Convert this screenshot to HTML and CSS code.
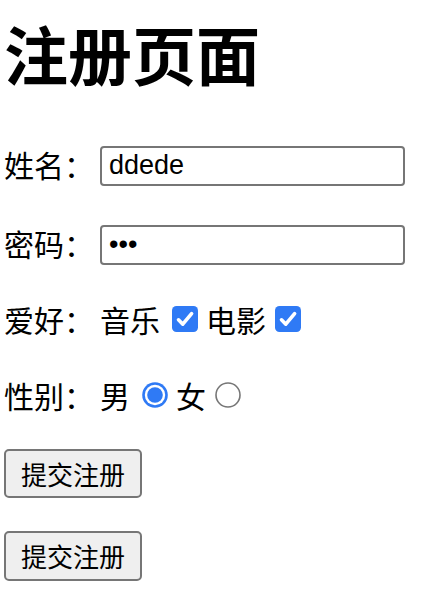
FILE: index.html
```html
<!DOCTYPE html>
<html lang="zh-CN">
<head>
<meta charset="utf-8">
<title>注册页面</title>
<link rel="stylesheet" href="styles.css">
</head>
<body>
<form class="page">
  <h1 class="title">注册页面</h1>
  <div class="row row-name">
    <span class="label">姓名：</span>
    <input class="field" type="text" value="ddede">
  </div>
  <div class="row row-pass">
    <span class="label">密码：</span>
    <input class="field" type="password" value="abc">
  </div>
  <div class="row row-hobby">
    <span class="label">爱好：</span>
    <span class="opt-text">音乐</span>
    <svg class="box box-first" viewBox="0 0 26 26" width="26" height="26"><rect x="0" y="0" width="26" height="26" rx="4.5" fill="#2f7af5"/><path d="M6.5 13.8 L10.8 18.2 L19.6 7.6" fill="none" stroke="#fff" stroke-width="3.6" stroke-linecap="round" stroke-linejoin="round"/></svg>
    <span class="opt-text">电影</span>
    <svg class="box box-last" viewBox="0 0 26 26" width="26" height="26"><rect x="0" y="0" width="26" height="26" rx="4.5" fill="#2f7af5"/><path d="M6.5 13.8 L10.8 18.2 L19.6 7.6" fill="none" stroke="#fff" stroke-width="3.6" stroke-linecap="round" stroke-linejoin="round"/></svg>
  </div>
  <div class="row row-sex">
    <span class="label">性别：</span>
    <span class="opt-text">男</span>
    <svg class="box box-first" viewBox="0 0 26 26" width="26" height="26"><circle cx="13" cy="13" r="12.8" fill="#2f7af5"/><circle cx="13" cy="13" r="10.2" fill="#fff"/><circle cx="13" cy="13" r="7.8" fill="#2f7af5"/></svg>
    <span class="opt-text">女</span>
    <svg class="box box-last" viewBox="0 0 26 26" width="26" height="26"><circle cx="13" cy="13" r="12" fill="#fff" stroke="#767676" stroke-width="1.6"/></svg>
  </div>
  <div class="row row-btn1">
    <button class="btn" type="button">提交注册</button>
  </div>
  <div class="row row-btn2">
    <button class="btn" type="submit">提交注册</button>
  </div>
</form>
</body>
</html>
```

FILE: styles.css
```css
html, body {
  margin: 0;
  padding: 0;
  background: #ffffff;
}

body {
  font-family: "Noto Sans CJK SC", "Noto Sans", sans-serif;
  color: #000000;
}

.page {
  display: flex;
  flex-direction: column;
  align-items: flex-start;
  padding: 0 0 0 4px;
}

.title {
  margin: 20px 0 0 0;
  height: 64px;
  line-height: 64px;
  font-size: 64px;
  font-weight: 700;
  letter-spacing: 0;
}

.row {
  display: flex;
  align-items: center;
  height: 40px;
  font-size: 30px;
}

.row-name { margin-top: 60px; }
.row-pass { margin-top: 39px; }
.row-hobby { margin-top: 36px; }
.row-sex { margin-top: 36px; }
.row-btn1 { margin-top: 34px; height: 49px; }
.row-btn2 { margin-top: 33px; height: 50px; }

.label {
  width: 90px;
  margin-right: 6px;
  white-space: nowrap;
  line-height: 40px;
}

.opt-text {
  line-height: 40px;
  white-space: nowrap;
}

.box {
  display: block;
  flex: none;
}

.box-first {
  margin-left: 12px;
  margin-right: 8px;
}

.box-last {
  margin-left: 9px;
}

.field {
  box-sizing: border-box;
  width: 305px;
  height: 40px;
  margin: 3px 0 0 0;
  padding: 0 7px;
  border: 2px solid #767676;
  border-radius: 4px;
  background: #ffffff;
  font-family: "Liberation Sans", Arial, sans-serif;
  font-size: 27px;
  color: #000000;
  outline: none;
}

.btn {
  box-sizing: border-box;
  height: 49px;
  padding: 0 15px;
  border: 2px solid #767676;
  border-radius: 5px;
  background: #efefef;
  font-family: "Noto Sans CJK SC", "Noto Sans", sans-serif;
  font-size: 26px;
  color: #000000;
  line-height: 1;
}

.row-btn2 .btn { height: 50px; }
```
